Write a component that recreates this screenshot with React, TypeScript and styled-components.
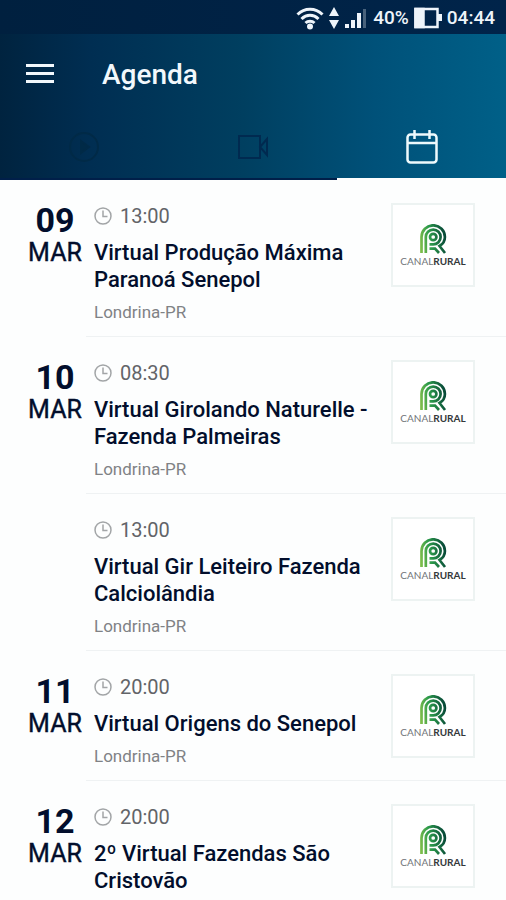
import React from "react";
import styled, { createGlobalStyle } from "styled-components";

const GlobalStyle = createGlobalStyle`
  *, *::before, *::after { box-sizing: border-box; }
  body {
    margin: 0;
    background: #fdfefe;
    color: #020e2c;
    font-family: Roboto, "Liberation Sans", sans-serif;
  }
`;

const Screen = styled.div`
  height: 100vh;
  overflow: hidden;
`;

const StatusBar = styled.div`
  display: flex;
  align-items: center;
  justify-content: flex-end;
  gap: 5px;
  height: 34px;
  padding: 2px 11px 0 0;
  background: linear-gradient(90deg, #00203f, #00244a);
  color: #eef4fa;
  font-size: 19px;
  font-weight: 500;
  line-height: 24px;
`;

const Header = styled.header`
  background: linear-gradient(90deg, #00233f 0%, #002e52 18%, #003f60 48%, #005179 74%, #006088 100%);
`;

const AppBar = styled.div`
  display: flex;
  align-items: center;
  gap: 48px;
  height: 82px;
  padding: 0 26px;
`;

const IconButton = styled.button`
  display: flex;
  padding: 0;
  border: 0;
  background: none;
  color: #f2f8fc;
  cursor: pointer;
`;

const PageTitle = styled.h1`
  margin: 0;
  color: #f2f8fc;
  font-size: 28px;
  font-weight: 500;
  line-height: 32px;
`;

const Tabs = styled.nav`
  display: grid;
  grid-template-columns: repeat(3, 1fr);
`;

const Tab = styled.button<{ $active?: boolean; $color: string }>`
  display: flex;
  align-items: center;
  justify-content: center;
  height: 64px;
  padding: 0;
  border: 0;
  border-bottom: 2px solid ${(p) => (p.$active ? "#fdfefe" : "#001f49")};
  background: none;
  color: ${(p) => p.$color};
  cursor: pointer;
`;

const List = styled.ul`
  margin: 0;
  padding: 0;
  list-style: none;
`;

const Row = styled.li`
  display: grid;
  grid-template-columns: 62px 1fr;
  padding-left: 24px;
`;

const DateBlock = styled.div`
  display: flex;
  flex-direction: column;
  align-items: center;
  padding-top: 23px;
`;

const Day = styled.span`
  font-size: 34px;
  font-weight: 700;
  line-height: 34px;
`;

const Month = styled.span`
  font-size: 25px;
  font-weight: 400;
  line-height: 32px;
  -webkit-text-stroke: 0.4px currentColor;
`;

const Body = styled.div`
  display: grid;
  grid-template-columns: 1fr 84px;
  align-items: start;
  gap: 12px;
  padding: 23px 31px 14px 8px;
  border-bottom: 1px solid #eff2f3;
`;

const Time = styled.div`
  display: flex;
  align-items: center;
  gap: 8px;
  color: #626468;
  font-size: 20px;
  line-height: 26px;
`;

const EventTitle = styled.h2`
  margin: 10px 0 9px;
  font-size: 22px;
  font-weight: 500;
  line-height: 27px;
`;

const Place = styled.p`
  margin: 0;
  color: #808285;
  font-size: 17px;
  line-height: 20px;
`;

const Channel = styled.div`
  display: flex;
  flex-direction: column;
  align-items: center;
  height: 84px;
  padding-top: 19px;
  border: 2px solid #edf3f2;
  background: #fff;
`;

const ChannelName = styled.span`
  color: #707477;
  font-family: Lato, sans-serif;
  font-size: 10px;
  font-weight: 400;
  line-height: 14px;
  white-space: nowrap;
  b { color: #34383a; font-weight: 700; }
`;

const WifiIcon = () => (
  <svg width="28" height="24" viewBox="0 0 28 24" fill="none" stroke="currentColor" strokeWidth="3">
    <path d="M1.5 8.5C8.5 1.5 19.5 1.5 26.5 8.5" />
    <path d="M5.5 13C10.5 8 17.5 8 22.5 13" />
    <path d="M9.5 17C12 14.5 16 14.5 18.5 17" />
    <circle cx="14" cy="20.5" r="3" fill="currentColor" stroke="none" />
  </svg>
);

const TrafficIcon = () => (
  <svg width="10" height="24" viewBox="0 0 10 24" fill="currentColor">
    <path d="M5 1l5 9H0zM5 23l5-9H0z" />
  </svg>
);

const SignalIcon = () => (
  <svg width="24" height="24" viewBox="0 0 24 24" fill="currentColor">
    <path d="M1 18h4v4H1zM7 14h4v8H7zM13 7h4v15h-4z" />
    <path d="M19 3h3v19h-3z" opacity=".3" />
  </svg>
);

const BatteryIcon = () => (
  <svg width="28" height="24" viewBox="0 0 28 24" fill="none" stroke="currentColor" strokeWidth="2.5">
    <path d="M1.5 3h22v18h-22z" />
    <path d="M1.5 3h8v18h-8z" fill="currentColor" />
    <path d="M24 8h4v7h-4z" fill="currentColor" stroke="none" />
  </svg>
);

const MenuIcon = () => (
  <svg width="28" height="22" viewBox="0 0 28 22" stroke="currentColor" strokeWidth="3">
    <path d="M0 1.5h28M0 9.5h28M0 17.5h28" />
  </svg>
);

const PlayIcon = () => (
  <svg width="32" height="32" viewBox="0 0 32 32" fill="none" stroke="currentColor" strokeWidth="2">
    <circle cx="16" cy="16" r="14" />
    <path d="M13 10l8 6-8 6z" fill="currentColor" />
  </svg>
);

const VideoIcon = () => (
  <svg width="32" height="26" viewBox="0 0 32 26" fill="none" stroke="currentColor" strokeWidth="2">
    <path d="M2 2h21v22H2zM23 13l7-8v16z" />
  </svg>
);

const CalendarIcon = () => (
  <svg width="32" height="34" viewBox="0 0 32 34" fill="none" stroke="currentColor" strokeWidth="2.5">
    <rect x="1.5" y="4.5" width="29" height="28" rx="3" />
    <path d="M1.5 13h29M8.5 0v9M23.5 0v9" />
  </svg>
);

const ClockIcon = () => (
  <svg width="18" height="18" viewBox="0 0 18 18" fill="none" stroke="#a2a5a7" strokeWidth="1.5">
    <circle cx="9" cy="9" r="8" />
    <path d="M9 3.5V9.5h4.5" />
  </svg>
);

const ChannelEmblem = () => (
  <svg width="28" height="30" viewBox="0 0 28 30" fill="none" stroke="url(#emblem)" strokeWidth="2.7">
    <defs>
      <linearGradient id="emblem" gradientUnits="userSpaceOnUse" x1="1" y1="16" x2="26" y2="12">
        <stop offset="0" stopColor="#7cbd4a" />
        <stop offset=".4" stopColor="#2c9a4b" />
        <stop offset="1" stopColor="#084a38" />
      </linearGradient>
    </defs>
    <path d="M2.5 29V13A11.7 11.7 0 0 1 25.9 13C25.9 17 24 20 20.5 22L26 29" />
    <path d="M6.8 29V13A7.4 7.4 0 1 1 14.2 20.4H10.5" />
    <circle cx="14.2" cy="13" r="3.2" />
    <path d="M10.5 24.6h5.5l4 4.4" />
  </svg>
);

type AgendaEvent = { day?: string; time: string; title: string; place: string };

const events: AgendaEvent[] = [
  { day: "09", time: "13:00", title: "Virtual Produção Máxima Paranoá Senepol", place: "Londrina-PR" },
  { day: "10", time: "08:30", title: "Virtual Girolando Naturelle - Fazenda Palmeiras", place: "Londrina-PR" },
  { time: "13:00", title: "Virtual Gir Leiteiro Fazenda Calciolândia", place: "Londrina-PR" },
  { day: "11", time: "20:00", title: "Virtual Origens do Senepol", place: "Londrina-PR" },
  { day: "12", time: "20:00", title: "2º Virtual Fazendas São Cristovão", place: "Londrina-PR" },
];

const EventRow = ({ day, time, title, place }: AgendaEvent) => (
  <Row>
    <DateBlock>
      {day && (
        <>
          <Day>{day}</Day>
          <Month>MAR</Month>
        </>
      )}
    </DateBlock>
    <Body>
      <div>
        <Time>
          <ClockIcon />
          <time>{time}</time>
        </Time>
        <EventTitle>{title}</EventTitle>
        <Place>{place}</Place>
      </div>
      <Channel>
        <ChannelEmblem />
        <ChannelName>
          CANAL<b>RURAL</b>
        </ChannelName>
      </Channel>
    </Body>
  </Row>
);

export default function App() {
  return (
    <Screen>
      <GlobalStyle />
      <StatusBar>
        <WifiIcon />
        <TrafficIcon />
        <SignalIcon />
        <span>40%</span>
        <BatteryIcon />
        <span>04:44</span>
      </StatusBar>
      <Header>
        <AppBar>
          <IconButton aria-label="Menu">
            <MenuIcon />
          </IconButton>
          <PageTitle>Agenda</PageTitle>
        </AppBar>
        <Tabs>
          <Tab $color="#002a47" aria-label="Ao vivo">
            <PlayIcon />
          </Tab>
          <Tab $color="#002a50" aria-label="Vídeos">
            <VideoIcon />
          </Tab>
          <Tab $active $color="#eefafd" aria-label="Agenda" aria-current="page">
            <CalendarIcon />
          </Tab>
        </Tabs>
      </Header>
      <List>
        {events.map((event) => (
          <EventRow key={event.title} {...event} />
        ))}
      </List>
    </Screen>
  );
}
